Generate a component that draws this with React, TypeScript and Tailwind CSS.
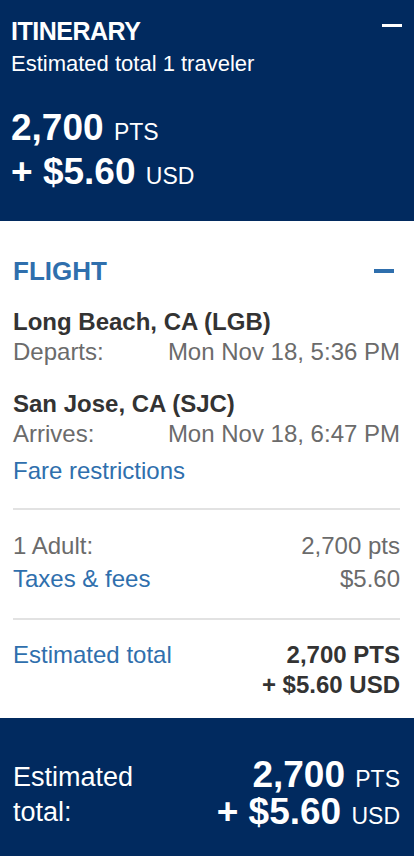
export default function App() {
  return (
    <div className="min-h-screen w-full bg-white font-['Liberation_Sans',Arial,sans-serif]">
      {/* Itinerary header */}
      <div className="bg-[#012a5f] pl-[11px] pr-[12px] pt-[15px] pb-[27px] text-white">
        <div className="flex items-start justify-between">
          <div className="text-[25px] font-bold leading-[33px] tracking-[-0.5px]">ITINERARY</div>
          <div className="mt-[9px] h-[3px] w-[20px] bg-white" />
        </div>
        <div className="text-[22px] leading-[32px]">Estimated total 1 traveler</div>
        <div className="mt-[26px] text-[37px] font-bold leading-[44px]">
          2,700 <span className="text-[23px] font-normal leading-none">PTS</span>
        </div>
        <div className="text-[37px] font-bold leading-[44px]">
          + $5.60 <span className="text-[23px] font-normal leading-none">USD</span>
        </div>
      </div>

      {/* Flight details */}
      <div className="pl-[13px] pr-[14px] pt-[33px] pb-[18px] text-[24px]">
        <div className="flex h-[34px] items-center justify-between">
          <div className="text-[26px] font-bold leading-[34px] text-[#2f6fad]">FLIGHT</div>
          <div className="mr-[6px] h-[4px] w-[20px] bg-[#2f6fad]" />
        </div>

        <div className="mt-[19px] font-bold leading-[30px] text-[#333]">Long Beach, CA (LGB)</div>
        <div className="flex justify-between leading-[30px] text-[#6b6b6b]">
          <span>Departs:</span>
          <span>Mon Nov 18, 5:36 PM</span>
        </div>

        <div className="mt-[22px] font-bold leading-[30px] text-[#333]">San Jose, CA (SJC)</div>
        <div className="flex justify-between leading-[30px] text-[#6b6b6b]">
          <span>Arrives:</span>
          <span>Mon Nov 18, 6:47 PM</span>
        </div>

        <div className="mt-[7px] leading-[30px] text-[#2f6fad]">Fare restrictions</div>

        <div className="mt-[22px] h-[2px] bg-[#e2e2e2]" />

        <div className="mt-[19px] flex justify-between leading-[33px] text-[#6b6b6b]">
          <span>1 Adult:</span>
          <span>2,700 pts</span>
        </div>
        <div className="flex justify-between leading-[33px]">
          <span className="text-[#2f6fad]">Taxes &amp; fees</span>
          <span className="text-[#6b6b6b]">$5.60</span>
        </div>

        <div className="mt-[23px] h-[2px] bg-[#e2e2e2]" />

        <div className="mt-[20px] flex items-start justify-between leading-[30px]">
          <span className="text-[#2f6fad]">Estimated total</span>
          <div className="text-right font-bold text-[#333]">
            <div>2,700 PTS</div>
            <div>+ $5.60 USD</div>
          </div>
        </div>
      </div>

      {/* Estimated total footer */}
      <div className="flex items-start justify-between bg-[#012a5f] pl-[13px] pr-[14px] pt-[38px] pb-[26px] text-white">
        <div className="w-[140px] pt-[4px] text-[27px] leading-[35px]">Estimated total:</div>
        <div className="text-right text-[37px] font-bold leading-[37px]">
          <div>
            2,700 <span className="text-[23px] font-normal leading-none">PTS</span>
          </div>
          <div>
            + $5.60 <span className="text-[23px] font-normal leading-none">USD</span>
          </div>
        </div>
      </div>
    </div>
  );
}
